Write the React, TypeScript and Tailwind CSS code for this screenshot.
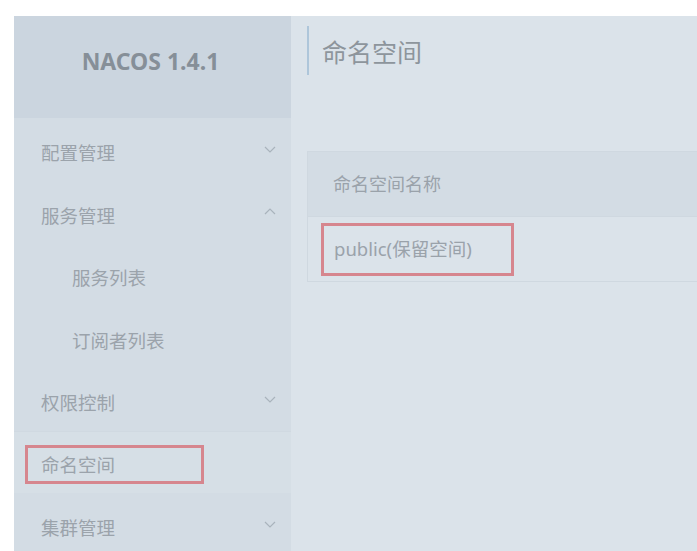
import React from 'react';

type MenuItem = {
  label: string;
  sub?: boolean;
  arrow?: 'down' | 'up';
  active?: boolean;
};

const menu: MenuItem[] = [
  { label: '配置管理', arrow: 'down' },
  { label: '服务管理', arrow: 'up' },
  { label: '服务列表', sub: true },
  { label: '订阅者列表', sub: true },
  { label: '权限控制', arrow: 'down' },
  { label: '命名空间', active: true },
  { label: '集群管理', arrow: 'down' },
];

const Chevron = ({ dir }: { dir: 'down' | 'up' }) => (
  <svg width="12" height="7" viewBox="0 0 12 7" className="text-[#a9b3bc]">
    <path
      d={dir === 'down' ? 'M1 1 L6 6 L11 1' : 'M1 6 L6 1 L11 6'}
      fill="none"
      stroke="currentColor"
      strokeWidth="1.2"
    />
  </svg>
);

const App = () => {
  return (
    <div
      className="w-[697px] h-[551px] bg-white pt-4 pl-[14px] flex overflow-hidden"
      style={{ fontFamily: '"Noto Sans", "Noto Sans CJK SC", sans-serif' }}
    >
      {/* 側邊欄 */}
      <div className="w-[277px] shrink-0 flex flex-col bg-[#d3dce4]">
        <div className="h-[102px] shrink-0 bg-[#cbd5df] flex items-center justify-center pr-1 pb-3">
          <span className="text-[23px] font-bold text-[#868f98]">NACOS 1.4.1</span>
        </div>
        {menu.map(item => (
          <div
            key={item.label}
            className={`h-[62.5px] shrink-0 flex items-center pr-[15px] ${item.active ? 'pt-1 bg-[#d6dfe6] border-t border-[#d0d9e1]' : 'pt-2'}`}
          >
            <div className={`flex-1 flex ${item.sub ? 'pl-[42px]' : 'pl-[11px]'}`}>
              <span
                className={`text-[18.5px] leading-none text-[#9ba3ab] ${item.active ? 'border-[3px] border-[#d6868e] w-[179px] h-[39px] flex items-center pl-[13px] pt-px' : 'pl-4'}`}
              >
                {item.label}
              </span>
            </div>
            {item.arrow && <div className="-mt-2"><Chevron dir={item.arrow} /></div>}
          </div>
        ))}
      </div>

      {/* 主內容 */}
      <div className="flex-1 bg-[#dbe3ea] min-w-0 pl-4 pt-[10px]">
        <div className="flex items-center h-[49px] border-l-2 border-[#aec6da] pl-[13px]">
          <span className="text-[25px] leading-none text-[#8d959c] pt-1">命名空间</span>
        </div>
        <div className="mt-[76px] w-[420px] border border-[#cfd8e0]">
          <div className="h-[65px] bg-[#d3dce4] border-b border-[#cfd8e0] flex items-center pl-[25px]">
            <span className="text-[18px] text-[#9aa2aa]">命名空间名称</span>
          </div>
          <div className="h-[64px] bg-[#dbe3ea] flex items-center pl-[13px]">
            <div className="w-[193px] h-[53px] border-[3px] border-[#d6868e] flex items-center pl-[10px] pb-px">
              <span className="text-[18.5px] text-[#9aa2aa]">public(保留空间)</span>
            </div>
          </div>
        </div>
      </div>
    </div>
  );
};

export default App;
